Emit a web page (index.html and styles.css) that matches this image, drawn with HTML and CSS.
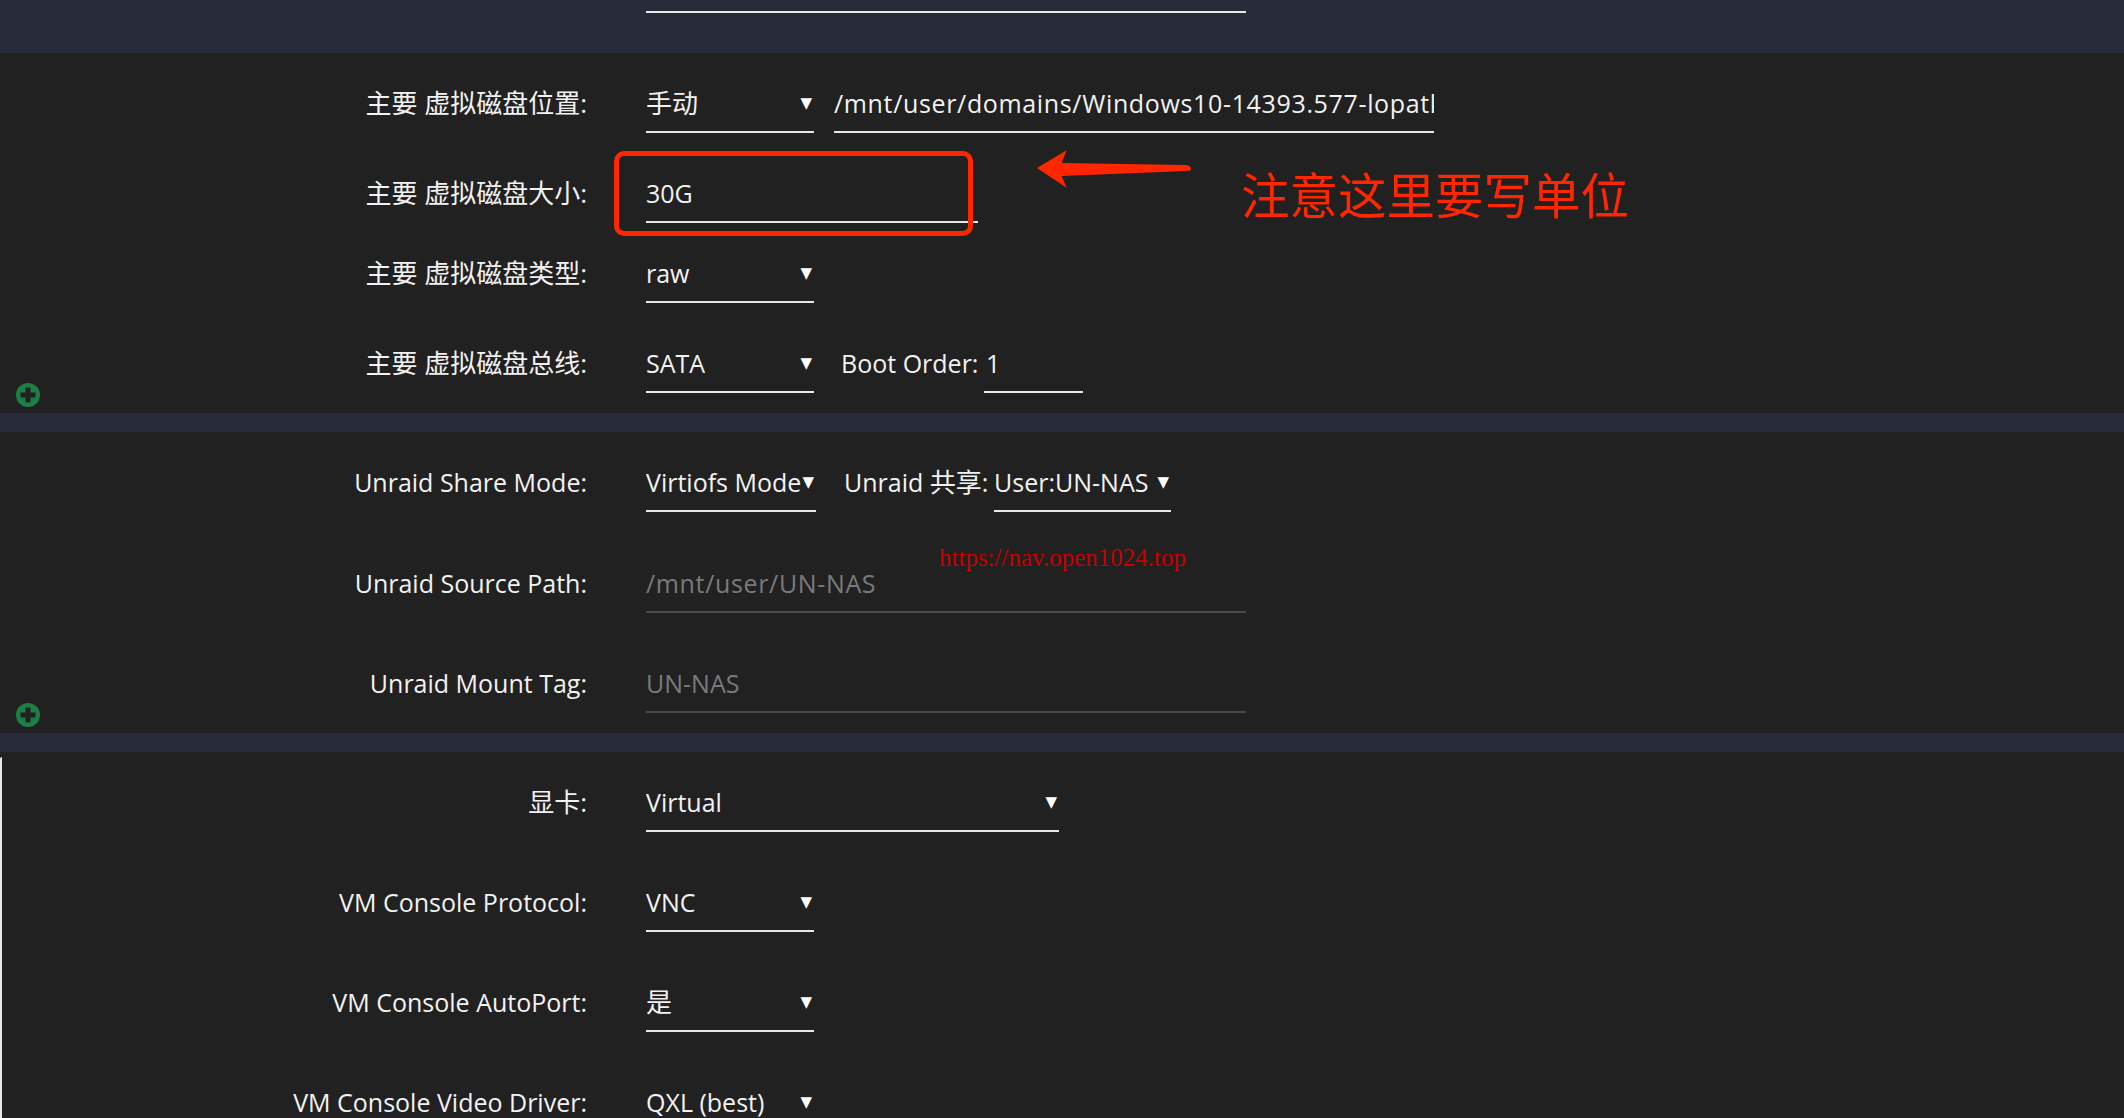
FILE: index.html
```html
<!DOCTYPE html>
<html lang="zh">
<head>
    <meta charset="UTF-8">
    <meta name="viewport" content="width=device-width, initial-scale=1.0">
    <title>Unraid VM Settings</title>
    <link rel="stylesheet" href="styles.css">
</head>
<body>
    <div class="band band-top">
        <div class="field field-top"></div>
    </div>

    <section class="section section-disk">
        <div class="row">
            <div class="label cjk">主要 虚拟磁盘位置:</div>
            <div class="field select"><span class="cjk">手动</span><span class="caret">▼</span></div>
            <div class="field field-path path-text">/mnt/user/domains/Windows10-14393.577-lopatk</div>
        </div>
        <div class="row row-tight">
            <div class="label cjk">主要 虚拟磁盘大小:</div>
            <div class="field field-size">30G</div>
        </div>
        <div class="row">
            <div class="label cjk">主要 虚拟磁盘类型:</div>
            <div class="field select">raw<span class="caret">▼</span></div>
        </div>
        <div class="row">
            <div class="label cjk">主要 虚拟磁盘总线:</div>
            <div class="field select">SATA<span class="caret">▼</span></div>
            <div class="inline-label boot-label">Boot Order:</div>
            <div class="field field-boot">1</div>
        </div>
        <span class="add-btn"><svg viewBox="0 0 24 24" width="24" height="24"><circle cx="12" cy="12" r="12" fill="#1e7f46"/><path d="M9.5 4.5h5v5h5v5h-5v5h-5v-5h-5v-5h5z" fill="#212121"/></svg></span>
    </section>

    <div class="band"></div>

    <section class="section section-share">
        <div class="row row-share-top">
            <div class="label">Unraid Share Mode:</div>
            <div class="field select select-mode">Virtiofs Mode<span class="caret">▼</span></div>
            <div class="inline-label share-label">Unraid <span class="cjk">共享</span>:</div>
            <div class="field select select-share">User:UN-NAS<span class="caret">▼</span></div>
        </div>
        <div class="row row-wide">
            <div class="label">Unraid Source Path:</div>
            <div class="field field-long muted path-text">/mnt/user/UN-NAS</div>
        </div>
        <div class="row">
            <div class="label">Unraid Mount Tag:</div>
            <div class="field field-long muted">UN-NAS</div>
        </div>
        <span class="add-btn"><svg viewBox="0 0 24 24" width="24" height="24"><circle cx="12" cy="12" r="12" fill="#1e7f46"/><path d="M9.5 4.5h5v5h5v5h-5v5h-5v-5h-5v-5h5z" fill="#212121"/></svg></span>
    </section>

    <div class="band"></div>

    <section class="section section-graphics">
        <div class="row row-wide">
            <div class="label cjk">显卡:</div>
            <div class="field select select-gpu">Virtual<span class="caret">▼</span></div>
        </div>
        <div class="row row-wide">
            <div class="label">VM Console Protocol:</div>
            <div class="field select">VNC<span class="caret">▼</span></div>
        </div>
        <div class="row row-wide">
            <div class="label">VM Console AutoPort:</div>
            <div class="field select"><span class="cjk">是</span><span class="caret">▼</span></div>
        </div>
        <div class="row row-wide">
            <div class="label">VM Console Video Driver:</div>
            <div class="field select">QXL (best)<span class="caret">▼</span></div>
        </div>
    </section>

    <!-- annotations drawn on top of the screenshot -->
    <div class="note-box"></div>
    <svg class="note-arrow" viewBox="0 0 156 38" width="154" height="38"><path d="M0 18 L30 0 L25 13 L151 15 Q156 16 156 19 Q156 21 151 21 L25 26 L30 38 Z" fill="#ff2600"/></svg>
    <div class="note-text">注意这里要写单位</div>
    <div class="watermark">https://nav.open1024.top</div>
</body>
</html>
```

FILE: styles.css
```css
html, body {
    height: 100%;
}

body {
    position: relative;
    margin: 0;
    overflow: hidden;
    background-color: #212121;
    color: #f2f2f2;
    font-family: 'Open Sans', 'Noto Sans CJK SC', sans-serif;
    font-size: 25px;
}

.cjk {
    font-size: 26px;
}

.band {
    height: 19px;
    background-color: #282b3a;
}

.band-top {
    height: 53px;
    padding-top: 1px;
    box-sizing: border-box;
}

.section {
    position: relative;
    box-sizing: border-box;
}

.section-disk {
    height: 360px;
    padding-top: 38px;
}

.section-share {
    height: 301px;
    padding-top: 38px;
}

.section-graphics {
    padding-top: 38px;
    height: 400px;
}

/* thin white edge, starts a little below the band */
.section-graphics::before {
    content: '';
    position: absolute;
    left: 0;
    top: 5px;
    bottom: 0;
    width: 2px;
    background-color: #e8e8e8;
    border-top-left-radius: 4px;
}

.row {
    display: flex;
    align-items: flex-start;
    margin-bottom: 48px;
}

.row-tight {
    margin-bottom: 38px;
}

.row-wide {
    margin-bottom: 58px;
}

.row-share-top {
    margin-bottom: 59px;
}

.label {
    width: 587px;
    margin-right: 59px;
    flex: none;
    height: 40px;
    line-height: 24px;
    text-align: right;
    white-space: nowrap;
}

.inline-label {
    flex: none;
    line-height: 24px;
    white-space: nowrap;
}

.field {
    position: relative;
    box-sizing: border-box;
    height: 42px;
    line-height: 24px;
    border-bottom: 2px solid #e8e8e8;
    white-space: nowrap;
    flex: none;
}

.field-top {
    width: 600px;
    height: 12px;
    margin-left: 646px;
}

.select {
    width: 168px;
}

.caret {
    position: absolute;
    right: 2px;
    top: 0;
    font-family: 'DejaVu Sans', sans-serif;
    font-size: 15px;
    color: #fff;
}

.field-path {
    width: 600px;
    margin-left: 20px;
    overflow: hidden;
}

.path-text {
    letter-spacing: 0.65px;
}

.field-size {
    width: 332px;
}

.boot-label {
    width: 143px;
    margin-left: 27px;
}

.field-boot {
    width: 99px;
    padding-left: 2px;
}

.select-mode {
    width: 170px;
}

.share-label {
    width: 150px;
    margin-left: 28px;
}

.select-share {
    width: 177px;
}

.select-gpu {
    width: 413px;
}

.field-long {
    width: 600px;
}

.muted {
    color: #7a7a7a;
    border-bottom-color: #4a4a4a;
}

.add-btn {
    position: absolute;
    left: 16px;
    bottom: 6px;
    line-height: 0;
}

.note-box {
    position: absolute;
    left: 614px;
    top: 151px;
    width: 359px;
    height: 85px;
    box-sizing: border-box;
    border: 5px solid #ff2600;
    border-radius: 10px;
}

.note-arrow {
    position: absolute;
    left: 1037px;
    top: 150px;
}

.note-text {
    position: absolute;
    left: 1241px;
    top: 161px;
    font-size: 48.5px;
    line-height: 64px;
    color: #ff2600;
    font-family: 'Noto Sans CJK SC', sans-serif;
    white-space: nowrap;
}

.watermark {
    position: absolute;
    left: 939px;
    top: 545px;
    font-family: 'Liberation Serif', serif;
    font-size: 25px;
    line-height: 26px;
    color: #c80000;
    white-space: nowrap;
}
```
